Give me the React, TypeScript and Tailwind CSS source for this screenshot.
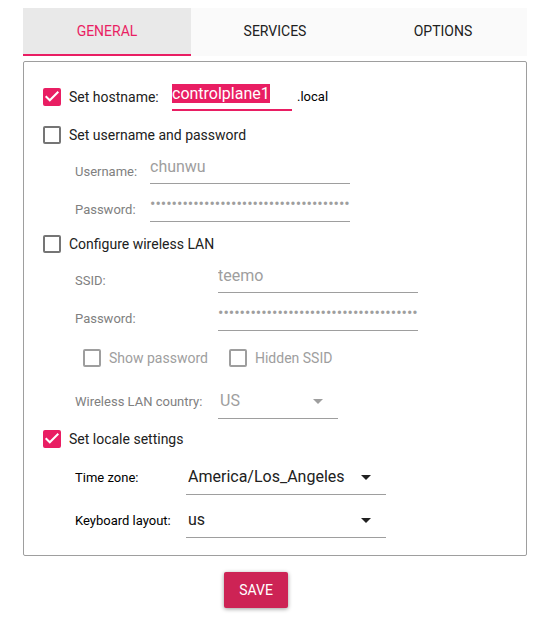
import { useEffect, useRef } from "react";
import type { ReactNode } from "react";

const tabs = ["GENERAL", "SERVICES", "OPTIONS"];

const fieldClass =
  "h-[27px] w-[200px] min-w-0 rounded-none border-b border-[#9e9e9e] bg-transparent p-0 text-base leading-[19px] text-[#9e9e9e] outline-none";

function Check({
  id,
  label,
  checked = false,
  disabled = false,
}: {
  id: string;
  label: string;
  checked?: boolean;
  disabled?: boolean;
}) {
  return (
    <span className="flex items-center gap-2">
      <span className="grid size-[18px] shrink-0">
        <input
          id={id}
          type="checkbox"
          defaultChecked={checked}
          disabled={disabled}
          className="peer col-start-1 row-start-1 size-[18px] appearance-none rounded-xs border-2 border-[#757575] checked:border-[#e91e63] checked:bg-[#e91e63] disabled:border-[#9e9e9e]"
        />
        <svg
          viewBox="0 0 18 18"
          className="pointer-events-none invisible col-start-1 row-start-1 size-[18px] peer-checked:visible"
          fill="none"
          stroke="white"
          strokeWidth="2"
        >
          <path d="M2.7 8.2 L6.8 12.3 L15.3 3.8" />
        </svg>
      </span>
      <label htmlFor={id} className={disabled ? "text-sm text-[#9e9e9e]" : "text-sm text-[#212121]"}>
        {label}
      </label>
    </span>
  );
}

function CheckRow({ children }: { children: ReactNode }) {
  return <div className="flex h-[33px] items-center pl-[19px]">{children}</div>;
}

function Field({
  id,
  label,
  type = "text",
  value,
  wide = false,
}: {
  id: string;
  label: string;
  type?: string;
  value: string;
  wide?: boolean;
}) {
  return (
    <div className="flex h-[38px] items-center pl-[51px]">
      <label
        htmlFor={id}
        className={`${wide ? "w-[143px]" : "w-[75px]"} shrink-0 pt-1 text-[13px] text-[#808080]`}
      >
        {label}
      </label>
      <input
        id={id}
        type={type}
        defaultValue={value}
        disabled
        className={`${fieldClass} ${type === "password" ? "pb-[9px]" : "pb-[7px]"}`}
      />
    </div>
  );
}

function Picker({
  id,
  label,
  value,
  disabled = false,
}: {
  id: string;
  label: string;
  value: string;
  disabled?: boolean;
}) {
  return (
    <div className="flex h-[43px] items-center pl-[51px]">
      <label
        htmlFor={id}
        className={`${disabled ? "w-[143px] text-[#808080]" : "w-[111px] text-black"} shrink-0 pt-[2px] text-[13px]`}
      >
        {label}
      </label>
      <span className={`${disabled ? "w-[120px] text-[#9e9e9e]" : "w-[200px] text-[#212121]"} grid items-center`}>
        <select
          id={id}
          disabled={disabled}
          defaultValue={value}
          className="col-start-1 row-start-1 h-9 w-full appearance-none rounded-none border-b border-[#9e9e9e] bg-transparent pt-[2px] pl-[2px] text-base opacity-100 outline-none"
        >
          <option>{value}</option>
        </select>
        <svg
          viewBox="0 0 10 5"
          className="pointer-events-none col-start-1 row-start-1 mt-[2px] mr-[15px] h-[5px] w-[10px] justify-self-end"
          fill="currentColor"
        >
          <path d="M0 0h10L5 5z" />
        </svg>
      </span>
    </div>
  );
}

export default function App() {
  const hostname = useRef<HTMLInputElement>(null);

  useEffect(() => {
    hostname.current?.focus();
    hostname.current?.select();
  }, []);

  return (
    <main className="min-h-screen bg-white pt-2 pr-[7px] pb-[11px] pl-[23px] font-['Roboto',sans-serif]">
      <div role="tablist" className="grid grid-cols-3 bg-[#fafafa]">
        {tabs.map((tab, i) => (
          <button
            key={tab}
            type="button"
            role="tab"
            aria-selected={i === 0}
            className="h-12 border-b-2 border-transparent text-sm text-[#212121] aria-selected:border-[#e91e63] aria-selected:bg-[#e9e9e9] aria-selected:text-[#e91e63]"
          >
            {tab}
          </button>
        ))}
      </div>

      <form className="mt-[5px]">
        <div className="rounded-xs border border-[#9e9e9e] pt-[14px] pb-[14px]">
          <div className="flex h-[42px] items-center pl-[19px]">
            <span className="w-[129px] shrink-0">
              <Check id="set-hostname" label="Set hostname:" checked />
            </span>
            <input
              ref={hostname}
              aria-label="Hostname"
              defaultValue="controlplane1"
              className="h-[27px] w-[120px] min-w-0 border-b-2 border-[#e91e63] bg-transparent p-0 pb-[6px] text-base leading-[19px] text-[#212121] outline-none selection:bg-[#e91e63] selection:text-white"
            />
            <span className="ml-[5px] text-[13px] text-black">.local</span>
          </div>

          <CheckRow>
            <Check id="set-user" label="Set username and password" />
          </CheckRow>
          <Field id="username" label="Username:" value="chunwu" />
          <Field id="password" label="Password:" type="password" value={"0".repeat(64)} />

          <CheckRow>
            <Check id="set-wifi" label="Configure wireless LAN" />
          </CheckRow>
          <Field id="ssid" label="SSID:" value="teemo" wide />
          <Field id="wifi-password" label="Password:" type="password" value={"0".repeat(64)} wide />
          <div className="flex h-[43px] items-center gap-[21px] pl-[59px]">
            <Check id="show-password" label="Show password" disabled />
            <Check id="hidden-ssid" label="Hidden SSID" disabled />
          </div>
          <Picker id="country" label="Wireless LAN country:" value="US" disabled />

          <CheckRow>
            <Check id="set-locale" label="Set locale settings" checked />
          </CheckRow>
          <Picker id="timezone" label="Time zone:" value="America/Los_Angeles" />
          <Picker id="keyboard" label="Keyboard layout:" value="us" />
        </div>

        <div className="mt-4 flex justify-center pr-[38px]">
          <button
            type="button"
            className="h-9 w-16 rounded-xs bg-[#cd2355] text-sm text-white shadow-[0_1px_4px_rgba(0,0,0,0.4)]"
          >
            SAVE
          </button>
        </div>
      </form>
    </main>
  );
}
